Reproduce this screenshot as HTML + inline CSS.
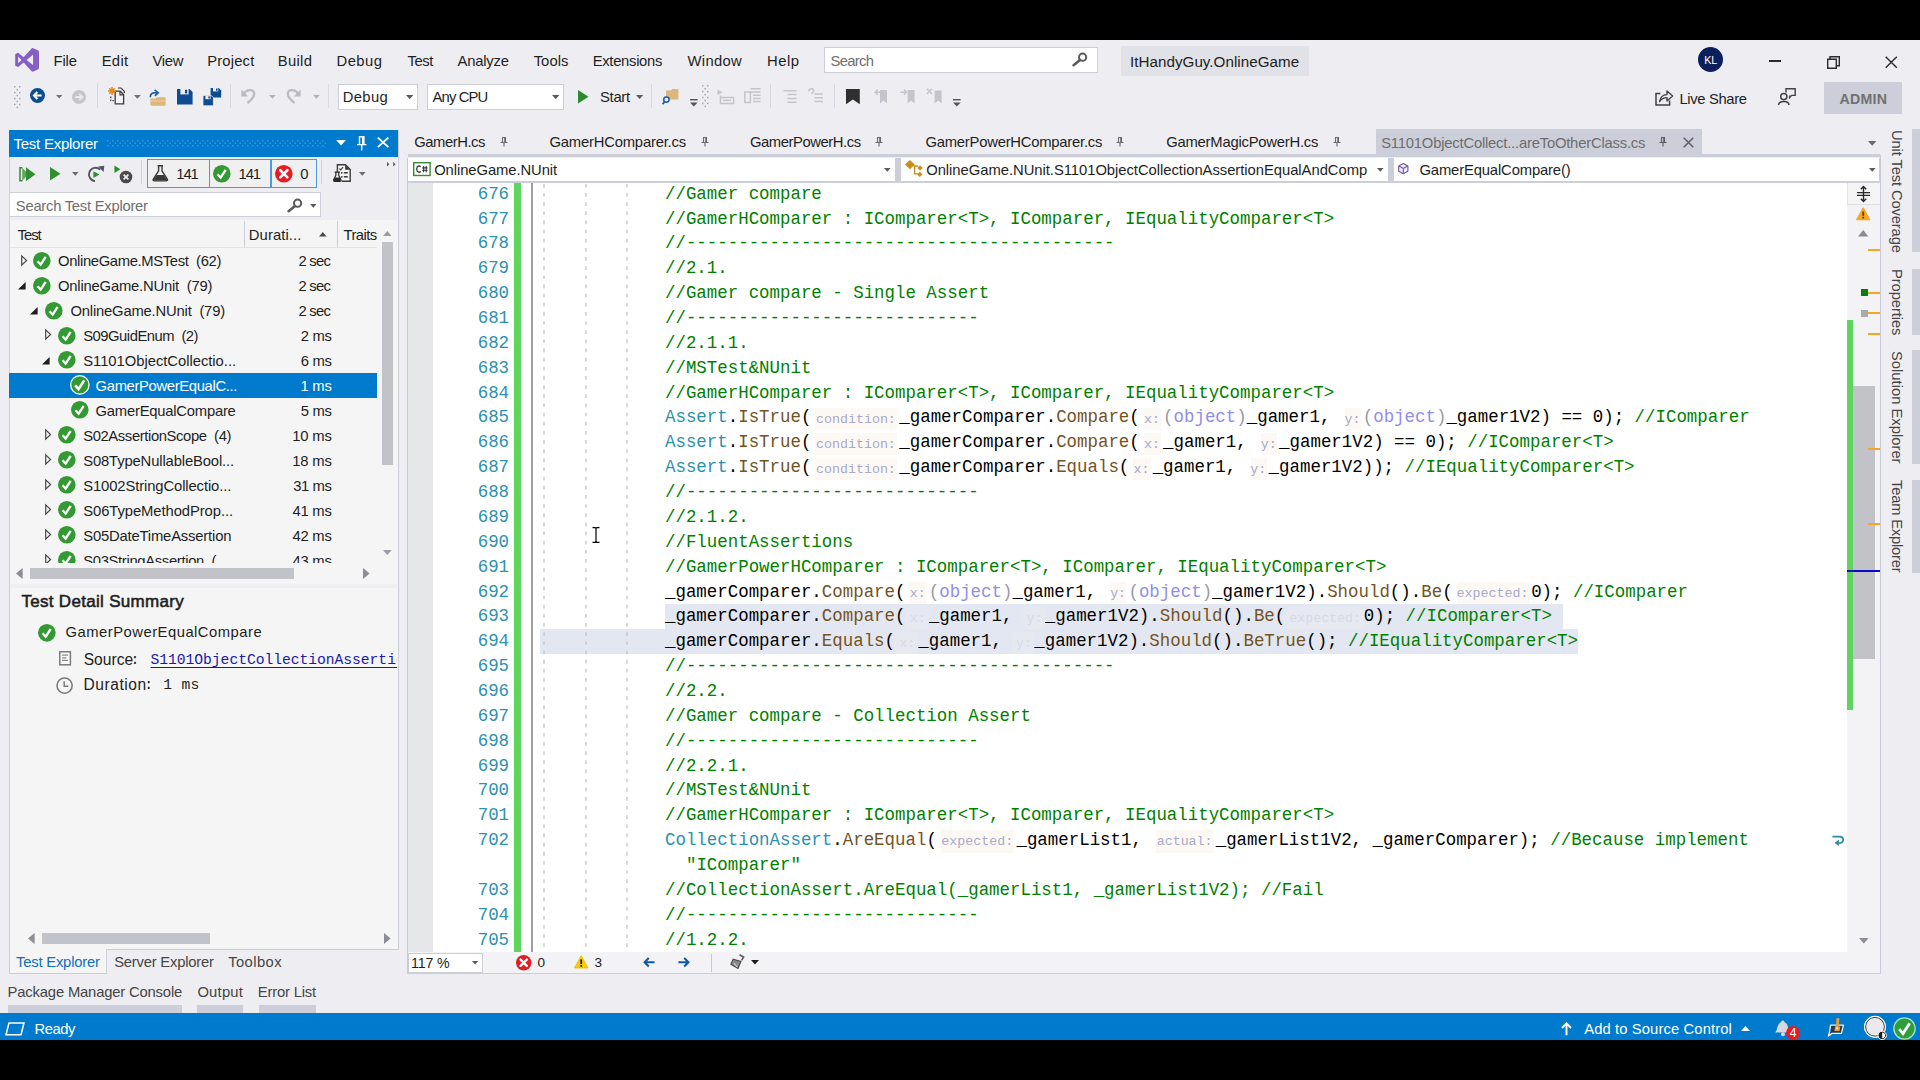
<!DOCTYPE html>
<html><head><meta charset="utf-8"><title>VS</title><style>
html,body{margin:0;padding:0;background:#000;}
body{width:1920px;height:1080px;position:relative;overflow:hidden;font-family:'Liberation Sans', sans-serif;}
#r{position:absolute;left:0;top:0;width:1920px;height:1080px;overflow:hidden;background:#000;}
#r div,#r svg{position:absolute;}
#r svg{overflow:visible;}
#r .cl,#r .ln{font-family:'Liberation Mono', monospace;font-size:17.430px;height:24.865px;line-height:24.865px;white-space:pre;color:#000;}
#r .ln{color:#2b91af;}
.c{color:#008000;} .k{color:#2b91af;} .m{color:#74531f;}
.fo{color:#9a9aa0;} .fk{color:#8f8fe6;}
.h{display:inline-block;box-sizing:border-box;height:22.5px;line-height:24px;font-size:13.3px;text-align:center;color:#a9a9cc;background:#fcf9f4;vertical-align:baseline;position:relative;top:0.3px;border-radius:2px;background-clip:content-box;padding:0 2.4px 0 3.6px;}
.hf{color:#d6dae8;background:#e7e9f1;}
</style></head><body><div id="r">
<div style="left:0px;top:40px;width:1920px;height:1000px;background:#eeeef2;"></div>
<svg style="left:15px;top:48px;" width="24.2" height="23.8" viewBox="0 0 24 24"><path fill="#865fc5" d="M17.583.063a1.5 1.5 0 00-1.032.392 1.5 1.5 0 00-.001 0A.88.88 0 0016.5.5L8.528 9.316 3.875 5.5l-.407-.35a1 1 0 00-1.024-.154.99.99 0 00-.012.005l-1.817.75a1 1 0 00-.077.036.98.98 0 00-.047.028l-.038.022a1 1 0 00-.453.838v10.65a1 1 0 00.453.838l.038.022a.98.98 0 00.047.028 1 1 0 00.077.036l1.817.75a.99.99 0 00.012.005 1 1 0 001.024-.154l.407-.35 4.653-3.816L16.5 23.5a.88.88 0 00.05.045 1.5 1.5 0 00.001 0 1.5 1.5 0 001.032.392 1.5 1.5 0 00.61-.13l5.082-2.446A1.5 1.5 0 0024 20.01V3.99a1.5 1.5 0 00-.725-1.351L18.193.193a1.5 1.5 0 00-.61-.13zM18 6.92v10.16L11.5 12zM3 8.574L6.358 12 3 15.426z"/></svg>
<div style="letter-spacing:-0.171px;left:53.60px;top:51.40px;height:20px;line-height:20px;font-size:14.8px;color:#1e1e1e;font-weight:normal;font-family:'Liberation Sans', sans-serif;white-space:pre;">File</div>
<div style="letter-spacing:0.305px;left:101.70px;top:51.40px;height:20px;line-height:20px;font-size:14.8px;color:#1e1e1e;font-weight:normal;font-family:'Liberation Sans', sans-serif;white-space:pre;">Edit</div>
<div style="letter-spacing:-0.306px;left:152.50px;top:51.40px;height:20px;line-height:20px;font-size:14.8px;color:#1e1e1e;font-weight:normal;font-family:'Liberation Sans', sans-serif;white-space:pre;">View</div>
<div style="letter-spacing:0.176px;left:207.20px;top:51.40px;height:20px;line-height:20px;font-size:14.8px;color:#1e1e1e;font-weight:normal;font-family:'Liberation Sans', sans-serif;white-space:pre;">Project</div>
<div style="letter-spacing:0.332px;left:277.70px;top:51.40px;height:20px;line-height:20px;font-size:14.8px;color:#1e1e1e;font-weight:normal;font-family:'Liberation Sans', sans-serif;white-space:pre;">Build</div>
<div style="letter-spacing:0.457px;left:336.50px;top:51.40px;height:20px;line-height:20px;font-size:14.8px;color:#1e1e1e;font-weight:normal;font-family:'Liberation Sans', sans-serif;white-space:pre;">Debug</div>
<div style="letter-spacing:-0.442px;left:407.50px;top:51.40px;height:20px;line-height:20px;font-size:14.8px;color:#1e1e1e;font-weight:normal;font-family:'Liberation Sans', sans-serif;white-space:pre;">Test</div>
<div style="letter-spacing:-0.202px;left:457.50px;top:51.40px;height:20px;line-height:20px;font-size:14.8px;color:#1e1e1e;font-weight:normal;font-family:'Liberation Sans', sans-serif;white-space:pre;">Analyze</div>
<div style="letter-spacing:0.039px;left:533.70px;top:51.40px;height:20px;line-height:20px;font-size:14.8px;color:#1e1e1e;font-weight:normal;font-family:'Liberation Sans', sans-serif;white-space:pre;">Tools</div>
<div style="letter-spacing:-0.298px;left:592.70px;top:51.40px;height:20px;line-height:20px;font-size:14.8px;color:#1e1e1e;font-weight:normal;font-family:'Liberation Sans', sans-serif;white-space:pre;">Extensions</div>
<div style="letter-spacing:0.312px;left:687.50px;top:51.40px;height:20px;line-height:20px;font-size:14.8px;color:#1e1e1e;font-weight:normal;font-family:'Liberation Sans', sans-serif;white-space:pre;">Window</div>
<div style="letter-spacing:0.499px;left:767.00px;top:51.40px;height:20px;line-height:20px;font-size:14.8px;color:#1e1e1e;font-weight:normal;font-family:'Liberation Sans', sans-serif;white-space:pre;">Help</div>
<div style="left:823.5px;top:47px;width:274.5px;height:26px;background:#ffffff;border:1px solid #ccced8;box-sizing:border-box;"></div>
<div style="letter-spacing:-0.691px;left:830.50px;top:51.40px;height:20px;line-height:20px;font-size:14.8px;color:#6e6e6e;font-weight:normal;font-family:'Liberation Sans', sans-serif;white-space:pre;">Search</div>
<svg style="left:1072px;top:52px;" width="16" height="14" viewBox="0 0 16 14"><circle cx="10.6" cy="5.2" r="3.6" fill="none" stroke="#5a5a5a" stroke-width="2"/><path d="M8.0 8.0 L1.6 13.2" stroke="#5a5a5a" stroke-width="2.6" stroke-linecap="round"/></svg>
<div style="left:1121px;top:45.5px;width:187.7px;height:30px;background:#e0e2e7;"></div>
<div style="letter-spacing:0.030px;left:1130.00px;top:52.10px;height:20px;line-height:20px;font-size:15.2px;color:#1e1e1e;font-weight:normal;font-family:'Liberation Sans', sans-serif;white-space:pre;">ItHandyGuy.OnlineGame</div>
<div style="left:1698.2px;top:47px;width:25px;height:25px;border-radius:50%;background:#0a1f5c;"></div>
<div style="letter-spacing:-0.201px;left:1704.30px;top:50.40px;height:20px;line-height:20px;font-size:10.8px;color:#fff;font-weight:normal;font-family:'Liberation Sans', sans-serif;white-space:pre;">KL</div>
<div style="left:1768.7px;top:60.3px;width:12.5px;height:1.5px;background:#2b2b2b;"></div>
<svg style="left:1827px;top:56px;" width="13" height="13" viewBox="0 0 13 13"><path d="M0.7 3.3 H9.3 V12.3 H0.7 Z" fill="none" stroke="#2b2b2b" stroke-width="1.4"/><path d="M3 3 V0.7 H12.3 V9.7 H9.6" fill="none" stroke="#2b2b2b" stroke-width="1.4"/></svg>
<svg style="left:1885px;top:56px;" width="12.5" height="12.5" viewBox="0 0 12.5 12.5"><path d="M0.7 0.7 L11.8 11.8 M11.8 0.7 L0.7 11.8" stroke="#2b2b2b" stroke-width="1.4"/></svg>
<svg style="left:13.9px;top:85.6px;" width="7" height="23" viewBox="0 0 7 23"><rect x="0" y="0.00" width="1.5" height="1.5" fill="#a3a4b0"/><rect x="5" y="0.00" width="1.5" height="1.5" fill="#a3a4b0"/><rect x="2.5" y="2.95" width="1.5" height="1.5" fill="#a3a4b0"/><rect x="0" y="5.90" width="1.5" height="1.5" fill="#a3a4b0"/><rect x="5" y="5.90" width="1.5" height="1.5" fill="#a3a4b0"/><rect x="2.5" y="8.85" width="1.5" height="1.5" fill="#a3a4b0"/><rect x="0" y="11.80" width="1.5" height="1.5" fill="#a3a4b0"/><rect x="5" y="11.80" width="1.5" height="1.5" fill="#a3a4b0"/><rect x="2.5" y="14.75" width="1.5" height="1.5" fill="#a3a4b0"/><rect x="0" y="17.70" width="1.5" height="1.5" fill="#a3a4b0"/><rect x="5" y="17.70" width="1.5" height="1.5" fill="#a3a4b0"/><rect x="2.5" y="20.65" width="1.5" height="1.5" fill="#a3a4b0"/></svg>
<svg style="left:30.4px;top:88.3px;" width="15" height="15" viewBox="0 0 15 15"><circle cx="7.5" cy="7.5" r="7.5" fill="#0e4c92"/><path d="M11.6 7.5 H4.2 M7.4 4.1 L4 7.5 L7.4 10.9" fill="none" stroke="#fff" stroke-width="2.1"/></svg>
<svg style="left:55.6px;top:95.2px;" width="6.4" height="3.6" viewBox="0 0 6.4 3.6"><path d="M0 0 H6.4 L3.2 3.6 Z" fill="#717171"/></svg>
<svg style="left:71.7px;top:89.7px;" width="14" height="14" viewBox="0 0 14 14"><circle cx="7" cy="7" r="7" fill="#c5c5cb"/><path d="M3.4 7 H10.2 M7.2 3.9 L10.4 7 L7.2 10.1" fill="none" stroke="#e9e9ee" stroke-width="2"/></svg>
<div style="left:97.2px;top:83px;width:1px;height:25px;background:#d9dae1;"></div>
<svg style="left:108px;top:87px;" width="17" height="18" viewBox="0 0 17 18"><path d="M7.2 4.2 H12.2 L15.6 7.6 V16.8 H7.2 Z" fill="#f4f4f7" stroke="#3b3b3b" stroke-width="1.3"/><path d="M12 4.4 V7.8 H15.4" fill="none" stroke="#3b3b3b" stroke-width="1.2"/><path d="M2.8 9.6 V13.6 H5.8" fill="none" stroke="#3b3b3b" stroke-width="1.2" stroke-dasharray="1.6 1.2"/><path d="M10 1.0 H13 L16.4 4.4 V6" fill="none" stroke="#3b3b3b" stroke-width="1.2"/><g stroke="#e8871a" stroke-width="1.5"><path d="M4 0 V8 M0 4 H8 M1.2 1.2 L6.8 6.8 M6.8 1.2 L1.2 6.8"/></g></svg>
<svg style="left:134.4px;top:95px;" width="6.8" height="3.8" viewBox="0 0 6.8 3.8"><path d="M0 0 H6.8 L3.4 3.8 Z" fill="#717171"/></svg>
<svg style="left:148.6px;top:89.6px;" width="18" height="16.4" viewBox="0 0 18 16.4"><path d="M1.4 8.6 H6.6 L7.8 7.2 H15.6 Q16.6 7.2 16.6 8.2 V14.6 Q16.6 15.8 15.4 15.8 H2.6 Q1.4 15.8 1.4 14.6 Z" fill="#dcb67a"/><path d="M1.4 10.4 H16.6 V11.6 H1.4 Z" fill="#f1d9ad" opacity="0.7"/><path d="M1.3 7.2 Q1.0 2.0 8.4 2.6 M5.6 -0.2 L9.2 2.7 L5.9 5.8" fill="none" stroke="#1b5fa6" stroke-width="1.7"/></svg>
<svg style="left:177.2px;top:89px;" width="15.6" height="15.6" viewBox="0 0 15.6 15.6"><path d="M0 0 H12.6 L15.6 3 V15.6 H0 Z" fill="#0e4c92"/><rect x="3.4" y="0" width="8.2" height="5.4" fill="#eeeef2"/><rect x="8" y="0.8" width="2.2" height="3.6" fill="#0e4c92"/></svg>
<svg style="left:203px;top:88px;" width="18.2" height="17.8" viewBox="0 0 18.2 17.8"><path d="M7.6 0 H15.8 L18.2 2.4 V9.6 H7.6 Z" fill="#0e4c92"/><rect x="10" y="0" width="5.2" height="3.4" fill="#eeeef2"/><rect x="13" y="0.5" width="1.5" height="2.3" fill="#0e4c92"/><path d="M0 7.4 H8.2 L10.4 9.6 V17.8 H0 Z" fill="#0e4c92" stroke="#eeeef2" stroke-width="0.8"/><rect x="2.4" y="7.8" width="5.2" height="3.4" fill="#eeeef2"/><rect x="5.4" y="8.3" width="1.5" height="2.3" fill="#0e4c92"/></svg>
<div style="left:230.3px;top:84px;width:1px;height:24px;background:#d9dae1;"></div>
<svg style="left:241px;top:88px;" width="15" height="16" viewBox="0 0 15 16"><path d="M6.4 15 C15 8.5 15 2.2 9 2.2 C6 2.2 3.6 4 2.4 7.4" fill="none" stroke="#b9bac3" stroke-width="2.3"/><path d="M0.4 1.6 V8.6 H7.2 Z" fill="#b9bac3"/></svg>
<svg style="left:268.7px;top:95px;" width="6.8" height="3.8" viewBox="0 0 6.8 3.8"><path d="M0 0 H6.8 L3.4 3.8 Z" fill="#b0b1ba"/></svg>
<svg style="left:286px;top:88px;" width="15" height="16" viewBox="0 0 15 16"><path d="M8.6 15 C0 8.5 0 2.2 6 2.2 C9 2.2 11.4 4 12.6 7.4" fill="none" stroke="#b9bac3" stroke-width="2.3"/><path d="M14.6 1.6 V8.6 H7.8 Z" fill="#b9bac3"/></svg>
<svg style="left:313px;top:95px;" width="6.8" height="3.8" viewBox="0 0 6.8 3.8"><path d="M0 0 H6.8 L3.4 3.8 Z" fill="#b0b1ba"/></svg>
<div style="left:328.2px;top:84px;width:1px;height:24px;background:#d9dae1;"></div>
<div style="left:338px;top:83.7px;width:80px;height:26px;background:#ffffff;border:1px solid #ccced8;box-sizing:border-box;"></div>
<div style="letter-spacing:0.357px;left:342.70px;top:87.20px;height:20px;line-height:20px;font-size:14.8px;color:#1e1e1e;font-weight:normal;font-family:'Liberation Sans', sans-serif;white-space:pre;">Debug</div>
<svg style="left:406.1px;top:95px;" width="7.4" height="4.2" viewBox="0 0 7.4 4.2"><path d="M0 0 H7.4 L3.7 4.2 Z" fill="#5a5a5a"/></svg>
<div style="left:427px;top:83.7px;width:137.3px;height:26px;background:#ffffff;border:1px solid #ccced8;box-sizing:border-box;"></div>
<div style="letter-spacing:-0.861px;left:432.50px;top:87.20px;height:20px;line-height:20px;font-size:14.8px;color:#1e1e1e;font-weight:normal;font-family:'Liberation Sans', sans-serif;white-space:pre;">Any CPU</div>
<svg style="left:552px;top:95px;" width="7.4" height="4.2" viewBox="0 0 7.4 4.2"><path d="M0 0 H7.4 L3.7 4.2 Z" fill="#5a5a5a"/></svg>
<svg style="left:578px;top:89.5px;" width="10.5" height="13.5" viewBox="0 0 10.5 13.5"><path d="M0 0 L10.5 6.75 L0 13.5 Z" fill="#2c8a2c"/></svg>
<div style="letter-spacing:-0.284px;left:600.00px;top:87.20px;height:20px;line-height:20px;font-size:14.8px;color:#1e1e1e;font-weight:normal;font-family:'Liberation Sans', sans-serif;white-space:pre;">Start</div>
<svg style="left:636px;top:95px;" width="7.2" height="4.1" viewBox="0 0 7.2 4.1"><path d="M0 0 H7.2 L3.6 4.1 Z" fill="#5a5a5a"/></svg>
<div style="left:651px;top:84px;width:1px;height:24px;background:#d9dae1;"></div>
<svg style="left:662px;top:88px;" width="18" height="17" viewBox="0 0 18 17"><path d="M4 2.6 H9 L10.2 1 H16.4 V11.6 H4 Z" fill="#dcb67a"/><circle cx="4.4" cy="11.6" r="2.7" fill="#eeeef2" stroke="#1b5fa6" stroke-width="1.5"/><path d="M2.6 13.6 L0.6 16.2" stroke="#1b5fa6" stroke-width="1.8"/></svg>
<svg style="left:689.5px;top:98.5px;" width="7.6" height="8" viewBox="0 0 7.6 8"><rect x="0" y="0" width="7.6" height="1.4" fill="#555"/><path d="M0 3.6 H7.6 L3.8 7.6 Z" fill="#555"/></svg>
<svg style="left:701.8px;top:85.4px;" width="7" height="23" viewBox="0 0 7 23"><rect x="0" y="0.00" width="1.5" height="1.5" fill="#a3a4b0"/><rect x="5" y="0.00" width="1.5" height="1.5" fill="#a3a4b0"/><rect x="2.5" y="2.95" width="1.5" height="1.5" fill="#a3a4b0"/><rect x="0" y="5.90" width="1.5" height="1.5" fill="#a3a4b0"/><rect x="5" y="5.90" width="1.5" height="1.5" fill="#a3a4b0"/><rect x="2.5" y="8.85" width="1.5" height="1.5" fill="#a3a4b0"/><rect x="0" y="11.80" width="1.5" height="1.5" fill="#a3a4b0"/><rect x="5" y="11.80" width="1.5" height="1.5" fill="#a3a4b0"/><rect x="2.5" y="14.75" width="1.5" height="1.5" fill="#a3a4b0"/><rect x="0" y="17.70" width="1.5" height="1.5" fill="#a3a4b0"/><rect x="5" y="17.70" width="1.5" height="1.5" fill="#a3a4b0"/><rect x="2.5" y="20.65" width="1.5" height="1.5" fill="#a3a4b0"/></svg>
<svg style="left:717px;top:89px;" width="18" height="16" viewBox="0 0 18 16"><path d="M0.5 0.5 L5.5 3.2 L0.5 6 Z" fill="#c3c4cc"/><path d="M3.4 6.5 V14.4 H16.6 V8.4 H3.4" fill="none" stroke="#c3c4cc" stroke-width="1.5"/><path d="M6 11.4 H14" stroke="#c3c4cc" stroke-width="1.4"/></svg>
<svg style="left:744px;top:88px;" width="17.5" height="17" viewBox="0 0 17.5 17"><path d="M6.4 0.8 H16.6 M6.4 4 H16.6 M9 7.2 H16.6 M9 10.4 H16.6 M9 13.6 H16.6" stroke="#c3c4cc" stroke-width="1.5"/><path d="M0.8 4 H6.4 V14.6 H0.8 Z" fill="none" stroke="#c3c4cc" stroke-width="1.5"/></svg>
<div style="left:770.2px;top:84px;width:1px;height:24px;background:#d9dae1;"></div>
<svg style="left:782.5px;top:89.5px;" width="14" height="14" viewBox="0 0 14 14"><path d="M0.5 0.8 H13.5 M4.5 4.6 H13.5 M4.5 8.4 H13.5 M4.5 12.2 H13.5" stroke="#c3c4cc" stroke-width="1.5"/></svg>
<svg style="left:807.5px;top:88px;" width="15.5" height="16" viewBox="0 0 15.5 16"><path d="M0.5 3.2 C1.5 -0.4 6.4 0.2 5.6 3.4 L3.2 6" fill="none" stroke="#c3c4cc" stroke-width="1.5"/><path d="M6.5 6 H15 M6.5 9.8 H15 M6.5 13.6 H15" stroke="#c3c4cc" stroke-width="1.5"/></svg>
<div style="left:834.2px;top:84px;width:1px;height:24px;background:#d9dae1;"></div>
<svg style="left:845.5px;top:88.7px;" width="13.8" height="15.2" viewBox="0 0 13.8 15.2"><path d="M0 0 H13.8 V15.2 L6.9 10.6 L0 15.2 Z" fill="#2f2f2f"/></svg>
<svg style="left:874px;top:88px;" width="14" height="16" viewBox="0 0 14 16"><path d="M6 2 H13 V15.6 L9.5 12.6 L6 15.6 Z" fill="#c3c4cc"/><path d="M7 4.2 H1.4 M3.8 1.6 L1.2 4.2 L3.8 6.8" fill="none" stroke="#c3c4cc" stroke-width="1.5"/></svg>
<svg style="left:900px;top:88px;" width="15" height="16" viewBox="0 0 15 16"><path d="M7.6 2 H14.6 V15.6 L11.1 12.6 L7.6 15.6 Z" fill="#c3c4cc"/><path d="M0.4 4.2 H6.4 M4 1.6 L6.6 4.2 L4 6.8" fill="none" stroke="#c3c4cc" stroke-width="1.5"/></svg>
<svg style="left:926px;top:88px;" width="16" height="16" viewBox="0 0 16 16"><path d="M8.6 2.6 H15.6 V15.6 L12.1 12.6 L8.6 15.6 Z" fill="#c3c4cc"/><path d="M0.8 0.8 L6 6 M6 0.8 L0.8 6" stroke="#c3c4cc" stroke-width="1.4"/></svg>
<svg style="left:953px;top:98.5px;" width="7.6" height="8" viewBox="0 0 7.6 8"><rect x="0" y="0" width="7.6" height="1.4" fill="#555"/><path d="M0 3.6 H7.6 L3.8 7.6 Z" fill="#555"/></svg>
<svg style="left:1654.5px;top:89.4px;" width="18.5" height="17" viewBox="0 0 18.5 17"><path d="M5.4 4.4 H1 V16 H14.6 V11.6" fill="none" stroke="#424242" stroke-width="1.5"/><path d="M4.6 12.6 C5.4 7.6 8.6 5.6 12 5.6 V2 L17.6 7 L12 12 V8.6 C9 8.6 6.6 9.6 4.6 12.6 Z" fill="none" stroke="#424242" stroke-width="1.4" stroke-linejoin="round"/></svg>
<div style="letter-spacing:-0.368px;left:1679.50px;top:89.00px;height:20px;line-height:20px;font-size:14.8px;color:#1e1e1e;font-weight:normal;font-family:'Liberation Sans', sans-serif;white-space:pre;">Live Share</div>
<svg style="left:1777.5px;top:88.0px;" width="18" height="17.5" viewBox="0 0 18 17.5"><circle cx="5.8" cy="8.6" r="3.1" fill="none" stroke="#424242" stroke-width="1.5"/><path d="M0.6 17 C0.8 12.4 10.8 12.4 11 17" fill="none" stroke="#424242" stroke-width="1.5"/><path d="M8 4.6 V0.8 H17.2 V7.4 H13.6 L11.6 9.6 V7.4" fill="none" stroke="#424242" stroke-width="1.4"/></svg>
<div style="left:1824px;top:82px;width:77.7px;height:31.7px;background:#ccced9;"></div>
<div style="letter-spacing:0.237px;left:1839.50px;top:88.50px;height:20px;line-height:20px;font-size:14.2px;color:#717171;font-weight:bold;font-family:'Liberation Sans', sans-serif;white-space:pre;">ADMIN</div>
<div style="left:8.7px;top:130px;width:390px;height:819.5px;background:#f5f5f5;border:1px solid #ccced8;box-sizing:border-box;"></div>
<div style="left:8.7px;top:130px;width:389.5px;height:26.8px;background:#007acc;"></div>
<div style="letter-spacing:-0.253px;left:13.50px;top:134.00px;height:20px;line-height:20px;font-size:15px;color:#ffffff;font-weight:normal;font-family:'Liberation Sans', sans-serif;white-space:pre;">Test Explorer</div>
<svg style="left:107px;top:139.8px" width="219" height="7.6"><defs><pattern id="hd" width="5" height="5" patternUnits="userSpaceOnUse"><rect x="0" y="0" width="1.5" height="1.5" fill="#ffffff" fill-opacity="0.2"/><rect x="2.5" y="2.5" width="1.5" height="1.5" fill="#ffffff" fill-opacity="0.2"/></pattern></defs><rect width="219" height="7.6" fill="url(#hd)"/></svg>
<svg style="left:336px;top:139.7px;" width="10" height="5.4" viewBox="0 0 10 5.4"><path d="M0 0 H10 L5.0 5.4 Z" fill="#ffffff"/></svg>
<svg style="left:356.9px;top:135.7px;" width="9.4" height="14.4" viewBox="0 0 9.4 14.4"><path d="M1.8 0.7 H7.6 M2.5 0.7 V8.2 M6.9 0.7 V8.2 M0 8.6 H9.4 M4.7 8.6 V14.4" stroke="#fff" stroke-width="1.4" fill="none"/><rect x="5" y="0.7" width="1.9" height="7.4" fill="#fff"/></svg>
<svg style="left:376.8px;top:137.4px;" width="12.2" height="10.8" viewBox="0 0 12.2 10.8"><path d="M0.8 0.6 L11.4 10.2 M11.4 0.6 L0.8 10.2" stroke="#fff" stroke-width="1.8"/></svg>
<div style="left:9.7px;top:156.8px;width:387.5px;height:62.8px;background:#eeeef2;"></div>
<svg style="left:18.6px;top:165.5px;" width="16.5" height="16.5" viewBox="0 0 16.5 16.5"><path d="M3.4 1.8 H1 V14.7 H3.4" fill="none" stroke="#2f8f2f" stroke-width="1.5"/><path d="M3.2 1.8 L9.4 8.25 L3.2 14.7 Z" fill="#2f8f2f" opacity="0.75"/><path d="M7 1.2 L16.4 8.25 L7 15.3 Z" fill="#2f8f2f"/></svg>
<svg style="left:50px;top:166.8px;" width="10.6" height="13.4" viewBox="0 0 10.6 13.4"><path d="M0 0 L10.6 6.7 L0 13.4 Z" fill="#2f8f2f"/></svg>
<svg style="left:72.4px;top:171.7px;" width="6.6" height="3.7" viewBox="0 0 6.6 3.7"><path d="M0 0 H6.6 L3.3 3.7 Z" fill="#6a6a6a"/></svg>
<svg style="left:87px;top:165px;" width="17.5" height="17.5" viewBox="0 0 17.5 17.5"><path d="M13.3 4.6 A6.7 6.7 0 1 0 8.0 16.1" fill="none" stroke="#55555f" stroke-width="1.9"/><path d="M11.2 1.6 L17.3 0.8 L16.6 7 Z" fill="#55555f"/><path d="M6.4 6.2 L12.4 9.6 L6.4 13 Z" fill="#2f8f2f"/></svg>
<svg style="left:113.7px;top:164.5px;" width="18.5" height="18.5" viewBox="0 0 18.5 18.5"><path d="M0.4 0.4 L6.4 4.2 L0.4 8 Z" fill="#2f8f2f"/><circle cx="12" cy="12" r="6.3" fill="#4a4a4a"/><path d="M9.6 9.6 L14.4 14.4 M14.4 9.6 L9.6 14.4" stroke="#eeeef2" stroke-width="1.7"/></svg>
<div style="left:141.3px;top:160px;width:1px;height:24px;background:#d2d3da;"></div>
<div style="left:147px;top:159.3px;width:62.6px;height:28.6px;background:#f0f0f1;border:1.2px solid #4a98e8;box-sizing:border-box;"></div>
<div style="left:209px;top:159.3px;width:62.2px;height:28.6px;background:#f0f0f1;border:1.2px solid #4a98e8;box-sizing:border-box;"></div>
<div style="left:270.6px;top:159.3px;width:46.800000000000004px;height:28.6px;background:#f0f0f1;border:1.2px solid #4a98e8;box-sizing:border-box;"></div>
<svg style="left:152px;top:165.2px;" width="16.6" height="16.6" viewBox="0 0 16.6 16.6"><path d="M5.6 0.7 H11 M6.6 0.7 V6 L1.2 14.2 Q0.6 15.9 2.4 15.9 H14.2 Q16 15.9 15.4 14.2 L10 6 V0.7" fill="none" stroke="#3a3a3a" stroke-width="1.4"/><path d="M4.6 10 H12 L15 14.4 Q15.4 15.6 14 15.6 H2.6 Q1.2 15.6 1.6 14.4 Z" fill="#3a3a3a"/></svg>
<div style="letter-spacing:-1.029px;left:176.20px;top:164.10px;height:20px;line-height:20px;font-size:14.8px;color:#1e1e1e;font-weight:normal;font-family:'Liberation Sans', sans-serif;white-space:pre;">141</div>
<svg style="left:213.4px;top:165px;" width="17.6" height="17.6" viewBox="0 0 17.6 17.6"><circle cx="8.8" cy="8.8" r="8.8" fill="#339933"/><path d="M4.626285714285714 9.252571428571429 L7.643428571428571 12.672 L12.672 4.827428571428571" fill="none" stroke="#fff" stroke-width="2.313142857142857" stroke-linecap="butt" stroke-linejoin="miter"/></svg>
<div style="letter-spacing:-1.079px;left:238.50px;top:164.10px;height:20px;line-height:20px;font-size:14.8px;color:#1e1e1e;font-weight:normal;font-family:'Liberation Sans', sans-serif;white-space:pre;">141</div>
<svg style="left:275.2px;top:165px;" width="17.6" height="17.6" viewBox="0 0 17.6 17.6"><circle cx="8.8" cy="8.8" r="8.8" fill="#e51c23"/><path d="M5.229714285714286 5.229714285714286 L12.370285714285716 12.370285714285716 M12.370285714285716 5.229714285714286 L5.229714285714286 12.370285714285716" stroke="#fff" stroke-width="2.614857142857143" stroke-linecap="round"/></svg>
<div style="letter-spacing:0.000px;left:300.20px;top:164.10px;height:20px;line-height:20px;font-size:14.8px;color:#1e1e1e;font-weight:normal;font-family:'Liberation Sans', sans-serif;white-space:pre;">0</div>
<div style="left:321.3px;top:160px;width:1px;height:24px;background:#d2d3da;"></div>
<svg style="left:332.5px;top:164px;" width="18" height="18" viewBox="0 0 18 18"><path d="M4.4 8 V0.7 H12.4 L17.2 5.5 V17.3 H8.6" fill="#f4f4f6" stroke="#3a3a3a" stroke-width="1.4"/><path d="M12.2 0.9 V5.7 H17 Z" fill="#3a3a3a"/><path d="M6.4 4.6 L7.7 5.9 L10 3.2" fill="none" stroke="#3a3a3a" stroke-width="1.1"/><circle cx="8.8" cy="8.8" r="0.85" fill="#2a2a2a"/><path d="M10.8 8.8 H14.8" stroke="#2a2a2a" stroke-width="1.4"/><circle cx="8.8" cy="12.8" r="0.85" fill="#2a2a2a"/><path d="M10.8 12.8 H14.8" stroke="#2a2a2a" stroke-width="1.4"/><path d="M1.6 8.1 H7 M2.9 8.1 V11.2 L0.7 15.8 Q0.3 17.4 1.7 17.4 H6.9 Q8.3 17.4 7.9 15.8 L5.7 11.2 V8.1" fill="#eeeef2" stroke="#2a2a2a" stroke-width="1.2"/><path d="M1.7 13.4 H6.9 L7.8 15.8 Q8 17.2 6.8 17.2 H1.8 Q0.6 17.2 0.8 15.8 Z" fill="#2a2a2a"/></svg>
<svg style="left:359px;top:171.7px;" width="6.6" height="3.7" viewBox="0 0 6.6 3.7"><path d="M0 0 H6.6 L3.3 3.7 Z" fill="#6a6a6a"/></svg>
<svg style="left:386.8px;top:162.4px;" width="9" height="4.6" viewBox="0 0 9 4.6"><path d="M0 0 L2.3 2.3 L0 4.6 Z M6.2 0 L8.5 2.3 L6.2 4.6 Z" fill="#5a5a5a"/></svg>
<div style="left:9.4px;top:191.7px;width:311.2px;height:25.4px;background:#ffffff;border:1px solid #ccced8;box-sizing:border-box;"></div>
<div style="letter-spacing:-0.259px;left:15.80px;top:195.90px;height:20px;line-height:20px;font-size:14.8px;color:#6e6e6e;font-weight:normal;font-family:'Liberation Sans', sans-serif;white-space:pre;">Search Test Explorer</div>
<svg style="left:286.6px;top:198px;" width="16" height="14" viewBox="0 0 16 14"><circle cx="10.6" cy="5.2" r="3.6" fill="none" stroke="#5a5a5a" stroke-width="2"/><path d="M8.0 8.0 L1.6 13.2" stroke="#5a5a5a" stroke-width="2.6" stroke-linecap="round"/></svg>
<svg style="left:309.6px;top:203.8px;" width="6.6" height="3.7" viewBox="0 0 6.6 3.7"><path d="M0 0 H6.6 L3.3 3.7 Z" fill="#5a5a5a"/></svg>
<div style="letter-spacing:-0.975px;left:17.50px;top:225.20px;height:20px;line-height:20px;font-size:14.8px;color:#1e1e1e;font-weight:normal;font-family:'Liberation Sans', sans-serif;white-space:pre;">Test</div>
<div style="left:243.6px;top:221px;width:1.2px;height:26px;background:#ccced8;"></div>
<div style="letter-spacing:0.088px;left:248.80px;top:225.20px;height:20px;line-height:20px;font-size:14.8px;color:#1e1e1e;font-weight:normal;font-family:'Liberation Sans', sans-serif;white-space:pre;">Durati...</div>
<svg style="left:318.8px;top:232px;" width="7.6" height="4.4" viewBox="0 0 7.6 4.4"><path d="M0 4.4 H7.6 L3.8 0 Z" fill="#4a4a4a"/></svg>
<div style="left:337px;top:221px;width:1.2px;height:26px;background:#ccced8;"></div>
<div style="letter-spacing:-0.549px;left:343.50px;top:225.20px;height:20px;line-height:20px;font-size:14.8px;color:#1e1e1e;font-weight:normal;font-family:'Liberation Sans', sans-serif;white-space:pre;">Traits</div>
<div style="left:9.7px;top:246.6px;width:367px;height:1px;background:#e3e4ea;"></div>
<div style="left:378px;top:221px;width:19px;height:340px;background:#f5f5f5;"></div>
<svg style="left:383px;top:231.4px;" width="8.6" height="5" viewBox="0 0 8.6 5"><path d="M0 5 H8.6 L4.3 0 Z" fill="#9a9ba4"/></svg>
<div style="left:382px;top:242px;width:10.8px;height:223px;background:#c2c3c9;"></div>
<svg style="left:383px;top:549.5px;" width="8.6" height="5" viewBox="0 0 8.6 5"><path d="M0 0 H8.6 L4.3 5 Z" fill="#9a9ba4"/></svg>
<div style="left:0;top:247.6px;width:378px;height:315.8px;overflow:hidden;">
<svg style="left:20.8px;top:7.000000000000028px;" width="6.6" height="11" viewBox="0 0 6.6 11"><path d="M0.7 0.9 L5.6 5.5 L0.7 10.1 Z" fill="none" stroke="#4a4a4a" stroke-width="1.2"/></svg>
<svg style="left:32.8px;top:4.200000000000028px;" width="17.6" height="17.6" viewBox="0 0 17.6 17.6"><circle cx="8.8" cy="8.8" r="8.8" fill="#339933"/><path d="M4.626285714285714 9.252571428571429 L7.643428571428571 12.672 L12.672 4.827428571428571" fill="none" stroke="#fff" stroke-width="2.313142857142857" stroke-linecap="butt" stroke-linejoin="miter"/></svg>
<div style="letter-spacing:-0.351px;left:58.00px;top:3.60px;height:20px;line-height:20px;font-size:14.8px;color:#1e1e1e;font-weight:normal;font-family:'Liberation Sans', sans-serif;white-space:pre;">OnlineGame.MSTest  (62)</div>
<div style="letter-spacing:-0.792px;left:298.60px;top:3.60px;height:20px;line-height:20px;font-size:14.8px;color:#1e1e1e;font-weight:normal;font-family:'Liberation Sans', sans-serif;white-space:pre;">2 sec</div>
<svg style="left:17.5px;top:34.60000000000003px;" width="8" height="8" viewBox="0 0 8 8"><path d="M7.6 0 V7.6 H0 Z" fill="#1e1e1e"/></svg>
<svg style="left:32.8px;top:29.200000000000028px;" width="17.6" height="17.6" viewBox="0 0 17.6 17.6"><circle cx="8.8" cy="8.8" r="8.8" fill="#339933"/><path d="M4.626285714285714 9.252571428571429 L7.643428571428571 12.672 L12.672 4.827428571428571" fill="none" stroke="#fff" stroke-width="2.313142857142857" stroke-linecap="butt" stroke-linejoin="miter"/></svg>
<div style="letter-spacing:-0.199px;left:58.00px;top:28.60px;height:20px;line-height:20px;font-size:14.8px;color:#1e1e1e;font-weight:normal;font-family:'Liberation Sans', sans-serif;white-space:pre;">OnlineGame.NUnit  (79)</div>
<div style="letter-spacing:-0.792px;left:298.60px;top:28.60px;height:20px;line-height:20px;font-size:14.8px;color:#1e1e1e;font-weight:normal;font-family:'Liberation Sans', sans-serif;white-space:pre;">2 sec</div>
<svg style="left:30.4px;top:59.50000000000001px;" width="8" height="8" viewBox="0 0 8 8"><path d="M7.6 0 V7.6 H0 Z" fill="#1e1e1e"/></svg>
<svg style="left:45.4px;top:54.10000000000001px;" width="17.6" height="17.6" viewBox="0 0 17.6 17.6"><circle cx="8.8" cy="8.8" r="8.8" fill="#339933"/><path d="M4.626285714285714 9.252571428571429 L7.643428571428571 12.672 L12.672 4.827428571428571" fill="none" stroke="#fff" stroke-width="2.313142857142857" stroke-linecap="butt" stroke-linejoin="miter"/></svg>
<div style="letter-spacing:-0.195px;left:70.50px;top:53.50px;height:20px;line-height:20px;font-size:14.8px;color:#1e1e1e;font-weight:normal;font-family:'Liberation Sans', sans-serif;white-space:pre;">OnlineGame.NUnit  (79)</div>
<div style="letter-spacing:-0.792px;left:298.60px;top:53.50px;height:20px;line-height:20px;font-size:14.8px;color:#1e1e1e;font-weight:normal;font-family:'Liberation Sans', sans-serif;white-space:pre;">2 sec</div>
<svg style="left:45.2px;top:81.79999999999998px;" width="6.6" height="11" viewBox="0 0 6.6 11"><path d="M0.7 0.9 L5.6 5.5 L0.7 10.1 Z" fill="none" stroke="#4a4a4a" stroke-width="1.2"/></svg>
<svg style="left:58px;top:78.99999999999999px;" width="17.6" height="17.6" viewBox="0 0 17.6 17.6"><circle cx="8.8" cy="8.8" r="8.8" fill="#339933"/><path d="M4.626285714285714 9.252571428571429 L7.643428571428571 12.672 L12.672 4.827428571428571" fill="none" stroke="#fff" stroke-width="2.313142857142857" stroke-linecap="butt" stroke-linejoin="miter"/></svg>
<div style="letter-spacing:-0.481px;left:83.20px;top:78.40px;height:20px;line-height:20px;font-size:14.8px;color:#1e1e1e;font-weight:normal;font-family:'Liberation Sans', sans-serif;white-space:pre;">S09GuidEnum  (2)</div>
<div style="letter-spacing:-0.355px;left:300.80px;top:78.40px;height:20px;line-height:20px;font-size:14.8px;color:#1e1e1e;font-weight:normal;font-family:'Liberation Sans', sans-serif;white-space:pre;">2 ms</div>
<svg style="left:42.4px;top:109.30000000000001px;" width="8" height="8" viewBox="0 0 8 8"><path d="M7.6 0 V7.6 H0 Z" fill="#1e1e1e"/></svg>
<svg style="left:58px;top:103.90000000000002px;" width="17.6" height="17.6" viewBox="0 0 17.6 17.6"><circle cx="8.8" cy="8.8" r="8.8" fill="#339933"/><path d="M4.626285714285714 9.252571428571429 L7.643428571428571 12.672 L12.672 4.827428571428571" fill="none" stroke="#fff" stroke-width="2.313142857142857" stroke-linecap="butt" stroke-linejoin="miter"/></svg>
<div style="letter-spacing:-0.028px;left:83.20px;top:103.30px;height:20px;line-height:20px;font-size:14.8px;color:#1e1e1e;font-weight:normal;font-family:'Liberation Sans', sans-serif;white-space:pre;">S1101ObjectCollectio...</div>
<div style="letter-spacing:-0.355px;left:300.80px;top:103.30px;height:20px;line-height:20px;font-size:14.8px;color:#1e1e1e;font-weight:normal;font-family:'Liberation Sans', sans-serif;white-space:pre;">6 ms</div>
<div style="left:8.7px;top:125.40000000000002px;width:368px;height:24.6px;background:#007acc;"></div>
<svg style="left:69.5px;top:127.80000000000001px;" width="19.7" height="19.7" viewBox="0 0 19.7 19.7"><circle cx="9.85" cy="9.85" r="9.85" fill="#fff"/><circle cx="9.85" cy="9.85" r="8.549999999999999" fill="#339933"/><path d="M5.178285714285714 10.356571428571428 L8.555428571428571 14.184 L14.184 5.403428571428571" fill="none" stroke="#fff" stroke-width="2.589142857142857" stroke-linecap="butt" stroke-linejoin="miter"/></svg>
<div style="letter-spacing:-0.345px;left:95.60px;top:128.30px;height:20px;line-height:20px;font-size:14.8px;color:#ffffff;font-weight:normal;font-family:'Liberation Sans', sans-serif;white-space:pre;">GamerPowerEqualC...</div>
<div style="letter-spacing:-0.289px;left:300.60px;top:128.30px;height:20px;line-height:20px;font-size:14.8px;color:#ffffff;font-weight:normal;font-family:'Liberation Sans', sans-serif;white-space:pre;">1 ms</div>
<svg style="left:70.6px;top:153.9px;" width="17.6" height="17.6" viewBox="0 0 17.6 17.6"><circle cx="8.8" cy="8.8" r="8.8" fill="#339933"/><path d="M4.626285714285714 9.252571428571429 L7.643428571428571 12.672 L12.672 4.827428571428571" fill="none" stroke="#fff" stroke-width="2.313142857142857" stroke-linecap="butt" stroke-linejoin="miter"/></svg>
<div style="letter-spacing:-0.231px;left:95.60px;top:153.30px;height:20px;line-height:20px;font-size:14.8px;color:#1e1e1e;font-weight:normal;font-family:'Liberation Sans', sans-serif;white-space:pre;">GamerEqualCompare</div>
<div style="letter-spacing:-0.355px;left:300.80px;top:153.30px;height:20px;line-height:20px;font-size:14.8px;color:#1e1e1e;font-weight:normal;font-family:'Liberation Sans', sans-serif;white-space:pre;">5 ms</div>
<svg style="left:45.2px;top:181.70000000000002px;" width="6.6" height="11" viewBox="0 0 6.6 11"><path d="M0.7 0.9 L5.6 5.5 L0.7 10.1 Z" fill="none" stroke="#4a4a4a" stroke-width="1.2"/></svg>
<svg style="left:58px;top:178.9px;" width="17.6" height="17.6" viewBox="0 0 17.6 17.6"><circle cx="8.8" cy="8.8" r="8.8" fill="#339933"/><path d="M4.626285714285714 9.252571428571429 L7.643428571428571 12.672 L12.672 4.827428571428571" fill="none" stroke="#fff" stroke-width="2.313142857142857" stroke-linecap="butt" stroke-linejoin="miter"/></svg>
<div style="letter-spacing:-0.383px;left:83.20px;top:178.30px;height:20px;line-height:20px;font-size:14.8px;color:#1e1e1e;font-weight:normal;font-family:'Liberation Sans', sans-serif;white-space:pre;">S02AssertionScope  (4)</div>
<div style="letter-spacing:-0.174px;left:292.20px;top:178.30px;height:20px;line-height:20px;font-size:14.8px;color:#1e1e1e;font-weight:normal;font-family:'Liberation Sans', sans-serif;white-space:pre;">10 ms</div>
<svg style="left:45.2px;top:206.70000000000002px;" width="6.6" height="11" viewBox="0 0 6.6 11"><path d="M0.7 0.9 L5.6 5.5 L0.7 10.1 Z" fill="none" stroke="#4a4a4a" stroke-width="1.2"/></svg>
<svg style="left:58px;top:203.9px;" width="17.6" height="17.6" viewBox="0 0 17.6 17.6"><circle cx="8.8" cy="8.8" r="8.8" fill="#339933"/><path d="M4.626285714285714 9.252571428571429 L7.643428571428571 12.672 L12.672 4.827428571428571" fill="none" stroke="#fff" stroke-width="2.313142857142857" stroke-linecap="butt" stroke-linejoin="miter"/></svg>
<div style="letter-spacing:-0.139px;left:83.20px;top:203.30px;height:20px;line-height:20px;font-size:14.8px;color:#1e1e1e;font-weight:normal;font-family:'Liberation Sans', sans-serif;white-space:pre;">S08TypeNullableBool...</div>
<div style="letter-spacing:-0.174px;left:292.20px;top:203.30px;height:20px;line-height:20px;font-size:14.8px;color:#1e1e1e;font-weight:normal;font-family:'Liberation Sans', sans-serif;white-space:pre;">18 ms</div>
<svg style="left:45.2px;top:231.70000000000002px;" width="6.6" height="11" viewBox="0 0 6.6 11"><path d="M0.7 0.9 L5.6 5.5 L0.7 10.1 Z" fill="none" stroke="#4a4a4a" stroke-width="1.2"/></svg>
<svg style="left:58px;top:228.9px;" width="17.6" height="17.6" viewBox="0 0 17.6 17.6"><circle cx="8.8" cy="8.8" r="8.8" fill="#339933"/><path d="M4.626285714285714 9.252571428571429 L7.643428571428571 12.672 L12.672 4.827428571428571" fill="none" stroke="#fff" stroke-width="2.313142857142857" stroke-linecap="butt" stroke-linejoin="miter"/></svg>
<div style="letter-spacing:-0.109px;left:83.20px;top:228.30px;height:20px;line-height:20px;font-size:14.8px;color:#1e1e1e;font-weight:normal;font-family:'Liberation Sans', sans-serif;white-space:pre;">S1002StringCollectio...</div>
<div style="letter-spacing:-0.424px;left:293.20px;top:228.30px;height:20px;line-height:20px;font-size:14.8px;color:#1e1e1e;font-weight:normal;font-family:'Liberation Sans', sans-serif;white-space:pre;">31 ms</div>
<svg style="left:45.2px;top:256.70000000000005px;" width="6.6" height="11" viewBox="0 0 6.6 11"><path d="M0.7 0.9 L5.6 5.5 L0.7 10.1 Z" fill="none" stroke="#4a4a4a" stroke-width="1.2"/></svg>
<svg style="left:58px;top:253.90000000000003px;" width="17.6" height="17.6" viewBox="0 0 17.6 17.6"><circle cx="8.8" cy="8.8" r="8.8" fill="#339933"/><path d="M4.626285714285714 9.252571428571429 L7.643428571428571 12.672 L12.672 4.827428571428571" fill="none" stroke="#fff" stroke-width="2.313142857142857" stroke-linecap="butt" stroke-linejoin="miter"/></svg>
<div style="letter-spacing:-0.076px;left:83.20px;top:253.30px;height:20px;line-height:20px;font-size:14.8px;color:#1e1e1e;font-weight:normal;font-family:'Liberation Sans', sans-serif;white-space:pre;">S06TypeMethodProp...</div>
<div style="letter-spacing:-0.274px;left:292.60px;top:253.30px;height:20px;line-height:20px;font-size:14.8px;color:#1e1e1e;font-weight:normal;font-family:'Liberation Sans', sans-serif;white-space:pre;">41 ms</div>
<svg style="left:45.2px;top:281.69999999999993px;" width="6.6" height="11" viewBox="0 0 6.6 11"><path d="M0.7 0.9 L5.6 5.5 L0.7 10.1 Z" fill="none" stroke="#4a4a4a" stroke-width="1.2"/></svg>
<svg style="left:58px;top:278.8999999999999px;" width="17.6" height="17.6" viewBox="0 0 17.6 17.6"><circle cx="8.8" cy="8.8" r="8.8" fill="#339933"/><path d="M4.626285714285714 9.252571428571429 L7.643428571428571 12.672 L12.672 4.827428571428571" fill="none" stroke="#fff" stroke-width="2.313142857142857" stroke-linecap="butt" stroke-linejoin="miter"/></svg>
<div style="letter-spacing:-0.177px;left:83.20px;top:278.30px;height:20px;line-height:20px;font-size:14.8px;color:#1e1e1e;font-weight:normal;font-family:'Liberation Sans', sans-serif;white-space:pre;">S05DateTimeAssertion</div>
<div style="letter-spacing:-0.274px;left:292.60px;top:278.30px;height:20px;line-height:20px;font-size:14.8px;color:#1e1e1e;font-weight:normal;font-family:'Liberation Sans', sans-serif;white-space:pre;">42 ms</div>
<svg style="left:45.2px;top:306.69999999999993px;" width="6.6" height="11" viewBox="0 0 6.6 11"><path d="M0.7 0.9 L5.6 5.5 L0.7 10.1 Z" fill="none" stroke="#4a4a4a" stroke-width="1.2"/></svg>
<svg style="left:58px;top:303.8999999999999px;" width="17.6" height="17.6" viewBox="0 0 17.6 17.6"><circle cx="8.8" cy="8.8" r="8.8" fill="#339933"/><path d="M4.626285714285714 9.252571428571429 L7.643428571428571 12.672 L12.672 4.827428571428571" fill="none" stroke="#fff" stroke-width="2.313142857142857" stroke-linecap="butt" stroke-linejoin="miter"/></svg>
<div style="letter-spacing:-0.329px;left:83.20px;top:303.30px;height:20px;line-height:20px;font-size:14.8px;color:#1e1e1e;font-weight:normal;font-family:'Liberation Sans', sans-serif;white-space:pre;">S03StringAssertion  (</div>
<div style="letter-spacing:-0.274px;left:292.60px;top:303.30px;height:20px;line-height:20px;font-size:14.8px;color:#1e1e1e;font-weight:normal;font-family:'Liberation Sans', sans-serif;white-space:pre;">43 ms</div>
</div>
<svg style="left:16.4px;top:568px;" width="6.6" height="11" viewBox="0 0 6.6 11"><path d="M6.6 0 V11 L0 5.5 Z" fill="#8c8d96"/></svg>
<div style="left:30px;top:568.3px;width:263.8px;height:10.7px;background:#c2c3c9;"></div>
<svg style="left:363px;top:568px;" width="6.6" height="11" viewBox="0 0 6.6 11"><path d="M0 0 V11 L6.6 5.5 Z" fill="#8c8d96"/></svg>
<div style="left:9.7px;top:583.5px;width:387.5px;height:4.6px;background:#efeff3;"></div>
<div style="letter-spacing:0.305px;left:21.40px;top:592.00px;height:20px;line-height:20px;font-size:17px;color:#1e1e1e;font-weight:normal;font-family:'Liberation Sans', sans-serif;white-space:pre;-webkit-text-stroke:0.55px #1e1e1e;">Test Detail Summary</div>
<svg style="left:37.6px;top:623.8px;" width="17.7" height="17.7" viewBox="0 0 17.7 17.7"><circle cx="8.85" cy="8.85" r="8.85" fill="#339933"/><path d="M4.652571428571428 9.305142857142856 L7.686857142857142 12.743999999999998 L12.743999999999998 4.854857142857142" fill="none" stroke="#fff" stroke-width="2.326285714285714" stroke-linecap="butt" stroke-linejoin="miter"/></svg>
<div style="letter-spacing:0.484px;left:65.60px;top:622.30px;height:20px;line-height:20px;font-size:14.8px;color:#1e1e1e;font-weight:normal;font-family:'Liberation Sans', sans-serif;white-space:pre;">GamerPowerEqualCompare</div>
<svg style="left:59px;top:651px;" width="12.4" height="14.6" viewBox="0 0 12.4 14.6"><rect x="0.8" y="0.8" width="10.6" height="13" fill="#fafafa" stroke="#7a7a7a" stroke-width="1.5"/><path d="M3 4.2 H9 M3 6.8 H7.4 M3 9.4 H9" stroke="#8a8a8a" stroke-width="1.2"/></svg>
<div style="letter-spacing:0.013px;left:83.70px;top:649.60px;height:20px;line-height:20px;font-size:15.6px;color:#1e1e1e;font-weight:normal;font-family:'Liberation Sans', sans-serif;white-space:pre;">Source</div>
<div style="letter-spacing:0.000px;left:130.60px;top:649.60px;height:20px;line-height:20px;font-size:14.7px;color:#1e1e1e;font-weight:normal;font-family:'Liberation Mono', monospace;white-space:pre;">:</div>
<div style="left:150px;top:647.5px;width:247.4px;height:26px;overflow:hidden;">
<div style="letter-spacing:-0.050px;left:0.50px;top:2.20px;height:20px;line-height:20px;font-size:14.7px;color:#1a1aa6;font-weight:normal;font-family:'Liberation Mono', monospace;white-space:pre;text-decoration:underline;text-underline-offset:2.5px;">S1101ObjectCollectionAssertionEqualAndCompareToOtherClass.cs</div>
</div>
<svg style="left:55.8px;top:676.8px;" width="17.2" height="17.2" viewBox="0 0 17.2 17.2"><circle cx="8.6" cy="8.6" r="7.6" fill="#f5f5f5" stroke="#7a7a7a" stroke-width="1.6"/><path d="M8.2 4.2 V9.2 H12.4" fill="none" stroke="#7a7a7a" stroke-width="1.5"/></svg>
<div style="letter-spacing:0.562px;left:83.40px;top:675.20px;height:20px;line-height:20px;font-size:15.6px;color:#1e1e1e;font-weight:normal;font-family:'Liberation Sans', sans-serif;white-space:pre;">Duration</div>
<div style="letter-spacing:0.000px;left:144.20px;top:675.20px;height:20px;line-height:20px;font-size:14.7px;color:#1e1e1e;font-weight:normal;font-family:'Liberation Mono', monospace;white-space:pre;">:</div>
<div style="letter-spacing:0.319px;left:163.20px;top:675.40px;height:20px;line-height:20px;font-size:14.7px;color:#1e1e1e;font-weight:normal;font-family:'Liberation Mono', monospace;white-space:pre;">1 ms</div>
<svg style="left:28.4px;top:932.8px;" width="6.6" height="11" viewBox="0 0 6.6 11"><path d="M6.6 0 V11 L0 5.5 Z" fill="#8c8d96"/></svg>
<div style="left:42px;top:933px;width:168px;height:10.7px;background:#c2c3c9;"></div>
<svg style="left:384.4px;top:932.8px;" width="6.6" height="11" viewBox="0 0 6.6 11"><path d="M0 0 V11 L6.6 5.5 Z" fill="#8c8d96"/></svg>
<div style="left:8.7px;top:948.5px;width:98.6px;height:25px;background:#f5f5f5;border:1px solid #ccced8;border-top:none;box-sizing:border-box;"></div>
<div style="letter-spacing:-0.202px;left:16.00px;top:951.80px;height:20px;line-height:20px;font-size:14.8px;color:#0e70c0;font-weight:normal;font-family:'Liberation Sans', sans-serif;white-space:pre;">Test Explorer</div>
<div style="letter-spacing:-0.219px;left:114.20px;top:951.80px;height:20px;line-height:20px;font-size:14.8px;color:#444444;font-weight:normal;font-family:'Liberation Sans', sans-serif;white-space:pre;">Server Explorer</div>
<div style="letter-spacing:0.400px;left:228.20px;top:951.80px;height:20px;line-height:20px;font-size:14.8px;color:#444444;font-weight:normal;font-family:'Liberation Sans', sans-serif;white-space:pre;">Toolbox</div>
<div style="letter-spacing:-0.176px;left:7.60px;top:981.80px;height:20px;line-height:20px;font-size:14.8px;color:#444444;font-weight:normal;font-family:'Liberation Sans', sans-serif;white-space:pre;">Package Manager Console</div>
<div style="letter-spacing:0.218px;left:197.40px;top:981.80px;height:20px;line-height:20px;font-size:14.8px;color:#444444;font-weight:normal;font-family:'Liberation Sans', sans-serif;white-space:pre;">Output</div>
<div style="letter-spacing:-0.190px;left:257.80px;top:981.80px;height:20px;line-height:20px;font-size:14.8px;color:#444444;font-weight:normal;font-family:'Liberation Sans', sans-serif;white-space:pre;">Error List</div>
<div style="left:8.3px;top:1005.3px;width:173.7px;height:8px;background:#ccced9;"></div>
<div style="left:197.3px;top:1005.3px;width:45.5px;height:8px;background:#ccced9;"></div>
<div style="left:258.6px;top:1005.3px;width:57.4px;height:8px;background:#ccced9;"></div>
<div style="left:0px;top:1013px;width:1920px;height:27px;background:#007acc;"></div>
<svg style="left:5.4px;top:1021.6px;" width="20" height="13.6" viewBox="0 0 20 13.6"><path d="M4 0.9 H19 L16 12.7 H1 Z" fill="none" stroke="#fff" stroke-width="1.5"/></svg>
<div style="letter-spacing:-0.443px;left:34.40px;top:1018.90px;height:20px;line-height:20px;font-size:14.8px;color:#ffffff;font-weight:normal;font-family:'Liberation Sans', sans-serif;white-space:pre;">Ready</div>
<div style="letter-spacing:-0.452px;left:414.20px;top:132.40px;height:20px;line-height:20px;font-size:14.8px;color:#1e1e1e;font-weight:normal;font-family:'Liberation Sans', sans-serif;white-space:pre;">GamerH.cs</div>
<svg style="left:499.5px;top:137.2px;" width="8" height="10" viewBox="0 0 8 10"><path d="M2 0.5 H6 M2.5 0.5 V5 M5.5 0.5 V5 M0.5 5.5 H7.5 M4 5.5 V9.5" stroke="#6a6a6a" stroke-width="1.1" fill="none"/><rect x="4.2" y="0.5" width="1.6" height="4.6" fill="#6a6a6a"/></svg>
<div style="letter-spacing:-0.199px;left:549.50px;top:132.40px;height:20px;line-height:20px;font-size:14.8px;color:#1e1e1e;font-weight:normal;font-family:'Liberation Sans', sans-serif;white-space:pre;">GamerHComparer.cs</div>
<svg style="left:700.7px;top:137.2px;" width="8" height="10" viewBox="0 0 8 10"><path d="M2 0.5 H6 M2.5 0.5 V5 M5.5 0.5 V5 M0.5 5.5 H7.5 M4 5.5 V9.5" stroke="#6a6a6a" stroke-width="1.1" fill="none"/><rect x="4.2" y="0.5" width="1.6" height="4.6" fill="#6a6a6a"/></svg>
<div style="letter-spacing:-0.435px;left:750.00px;top:132.40px;height:20px;line-height:20px;font-size:14.8px;color:#1e1e1e;font-weight:normal;font-family:'Liberation Sans', sans-serif;white-space:pre;">GamerPowerH.cs</div>
<svg style="left:874.8px;top:137.2px;" width="8" height="10" viewBox="0 0 8 10"><path d="M2 0.5 H6 M2.5 0.5 V5 M5.5 0.5 V5 M0.5 5.5 H7.5 M4 5.5 V9.5" stroke="#6a6a6a" stroke-width="1.1" fill="none"/><rect x="4.2" y="0.5" width="1.6" height="4.6" fill="#6a6a6a"/></svg>
<div style="letter-spacing:-0.230px;left:925.50px;top:132.40px;height:20px;line-height:20px;font-size:14.8px;color:#1e1e1e;font-weight:normal;font-family:'Liberation Sans', sans-serif;white-space:pre;">GamerPowerHComparer.cs</div>
<svg style="left:1116.2px;top:137.2px;" width="8" height="10" viewBox="0 0 8 10"><path d="M2 0.5 H6 M2.5 0.5 V5 M5.5 0.5 V5 M0.5 5.5 H7.5 M4 5.5 V9.5" stroke="#6a6a6a" stroke-width="1.1" fill="none"/><rect x="4.2" y="0.5" width="1.6" height="4.6" fill="#6a6a6a"/></svg>
<div style="letter-spacing:-0.224px;left:1166.20px;top:132.40px;height:20px;line-height:20px;font-size:14.8px;color:#1e1e1e;font-weight:normal;font-family:'Liberation Sans', sans-serif;white-space:pre;">GamerMagicPowerH.cs</div>
<svg style="left:1332.5px;top:137.2px;" width="8" height="10" viewBox="0 0 8 10"><path d="M2 0.5 H6 M2.5 0.5 V5 M5.5 0.5 V5 M0.5 5.5 H7.5 M4 5.5 V9.5" stroke="#6a6a6a" stroke-width="1.1" fill="none"/><rect x="4.2" y="0.5" width="1.6" height="4.6" fill="#6a6a6a"/></svg>
<div style="left:1376.2px;top:128.7px;width:325.6px;height:27px;background:#ccced9;"></div>
<div style="letter-spacing:-0.204px;left:1381.20px;top:133.00px;height:20px;line-height:20px;font-size:14.8px;color:#6d6d6d;font-weight:normal;font-family:'Liberation Sans', sans-serif;white-space:pre;">S1101ObjectCollect...areToOtherClass.cs</div>
<svg style="left:1659px;top:137.2px;" width="8" height="10" viewBox="0 0 8 10"><path d="M2 0.5 H6 M2.5 0.5 V5 M5.5 0.5 V5 M0.5 5.5 H7.5 M4 5.5 V9.5" stroke="#5a5a68" stroke-width="1.1" fill="none"/><rect x="4.2" y="0.5" width="1.6" height="4.6" fill="#5a5a68"/></svg>
<svg style="left:1682.5px;top:136.8px;" width="11" height="10.6" viewBox="0 0 11 10.6"><path d="M0.7 0.7 L10.3 10.3 M10.3 0.7 L0.7 10.3" stroke="#5f6070" stroke-width="1.6"/></svg>
<svg style="left:1868px;top:141px;" width="8.4" height="4.8" viewBox="0 0 8.4 4.8"><path d="M0 0 H8.4 L4.2 4.8 Z" fill="#6a6a6a"/></svg>
<div style="left:408px;top:154.3px;width:1472px;height:3.2px;background:#ccced9;"></div>
<div style="left:408px;top:157.5px;width:1472px;height:25px;background:#ccced9;"></div>
<div style="left:408.2px;top:157.5px;width:486.8px;height:23.6px;background:#ffffff;"></div>
<div style="left:900.5px;top:157.5px;width:487.6px;height:23.6px;background:#ffffff;"></div>
<div style="left:1393.9px;top:157.5px;width:485.6px;height:23.6px;background:#ffffff;"></div>
<svg style="left:413px;top:162px;" width="17.8" height="14.2" viewBox="0 0 17.8 14.2"><rect x="0.7" y="0.7" width="16.4" height="12.8" fill="#fff" stroke="#388a34" stroke-width="1.4"/><path d="M7.8 4.6 Q5.6 3.2 4.2 5 Q3 7.1 4.2 9.2 Q5.6 11 7.8 9.6" fill="none" stroke="#3a3a3a" stroke-width="1.3"/><path d="M10.6 4 V10.2 M13.2 4 V10.2 M9.2 5.9 H14.6 M9.2 8.3 H14.6" stroke="#3a3a3a" stroke-width="1.1"/></svg>
<div style="letter-spacing:-0.084px;left:434.20px;top:160.20px;height:20px;line-height:20px;font-size:14.8px;color:#1e1e1e;font-weight:normal;font-family:'Liberation Sans', sans-serif;white-space:pre;">OnlineGame.NUnit</div>
<svg style="left:884.2px;top:168.2px;" width="6.6" height="3.7" viewBox="0 0 6.6 3.7"><path d="M0 0 H6.6 L3.3 3.7 Z" fill="#5a5a5a"/></svg>
<svg style="left:905px;top:160px;" width="18" height="17.2" viewBox="0 0 18 17.2"><path d="M4.9 0 L9.8 4.6 L4.9 9.2 L0 4.6 Z" fill="#cf8b17"/><path d="M8.4 6 H13 M9.6 6.2 V13.9 H12.8" fill="none" stroke="#c58a2a" stroke-width="1.4"/><path d="M15 5.2 L17.7 7.9 L15 10.6 L12.3 7.9 Z" fill="#cf8b17"/><path d="M14.8 11.7 L17.5 14.4 L14.8 17.1 L12.1 14.4 Z" fill="#cf8b17"/></svg>
<div style="letter-spacing:-0.035px;left:926.20px;top:160.20px;height:20px;line-height:20px;font-size:14.8px;color:#1e1e1e;font-weight:normal;font-family:'Liberation Sans', sans-serif;white-space:pre;">OnlineGame.NUnit.S1101ObjectCollectionAssertionEqualAndComp</div>
<svg style="left:1377.4px;top:168.2px;" width="6.6" height="3.7" viewBox="0 0 6.6 3.7"><path d="M0 0 H6.6 L3.3 3.7 Z" fill="#5a5a5a"/></svg>
<svg style="left:1397.8px;top:163.2px;" width="10.6" height="11.4" viewBox="0 0 10.6 11.4"><path d="M5.3 0.6 L9.9 2.9 V8.3 L5.3 10.8 L0.7 8.3 V2.9 Z" fill="#f1e9fb" stroke="#6d5a9e" stroke-width="1.1" stroke-linejoin="round"/><path d="M0.9 3 L5.3 5.4 L9.7 3 M5.3 5.4 V10.6" fill="none" stroke="#6d5a9e" stroke-width="1.1"/></svg>
<div style="letter-spacing:-0.147px;left:1419.50px;top:160.20px;height:20px;line-height:20px;font-size:14.8px;color:#1e1e1e;font-weight:normal;font-family:'Liberation Sans', sans-serif;white-space:pre;">GamerEqualCompare()</div>
<svg style="left:1868.6px;top:168.2px;" width="6.6" height="3.7" viewBox="0 0 6.6 3.7"><path d="M0 0 H6.6 L3.3 3.7 Z" fill="#5a5a5a"/></svg>
<div style="left:408px;top:182.5px;width:1471.6px;height:769.5px;background:#ffffff;overflow:hidden;">
<div style="left:0px;top:0px;width:24.6px;height:771px;background:#e6e7e8;"></div>
<div style="left:257.0px;top:421.905px;width:897.5px;height:25.165px;background:#e3e7f2;"></div>
<div style="left:132px;top:446.77px;width:1038px;height:25.165px;background:#e3e7f2;"></div>
<div style="left:105.79999999999995px;top:0px;width:7px;height:771px;background:#5dd55f;"></div>
<div style="left:123px;top:0px;width:1.9px;height:771px;background:#a0a0a0;"></div>
<svg style="left:135.20000000000005px;top:0px;" width="2" height="771" viewBox="0 0 2 771"><path d="M1 0 V771" stroke="#c4c4c4" stroke-width="1.3" stroke-dasharray="3.7 5.45" stroke-dashoffset="-0.9"/></svg>
<svg style="left:177.20000000000005px;top:0px;" width="2" height="771" viewBox="0 0 2 771"><path d="M1 0 V771" stroke="#c4c4c4" stroke-width="1.3" stroke-dasharray="3.7 5.45" stroke-dashoffset="-0.9"/></svg>
<svg style="left:218.20000000000005px;top:0px;" width="2" height="771" viewBox="0 0 2 771"><path d="M1 0 V771" stroke="#c4c4c4" stroke-width="1.3" stroke-dasharray="3.7 5.45" stroke-dashoffset="-0.9"/></svg>
<div class="ln" style="left:69.7px;top:-0.80px;">676</div>
<div class="cl" style="left:257.0px;top:-0.80px;"><span class="c">//Gamer compare</span></div>
<div class="ln" style="left:69.7px;top:24.06px;">677</div>
<div class="cl" style="left:257.0px;top:24.06px;"><span class="c">//GamerHComparer : IComparer&lt;T&gt;, IComparer, IEqualityComparer&lt;T&gt;</span></div>
<div class="ln" style="left:69.7px;top:48.93px;">678</div>
<div class="cl" style="left:257.0px;top:48.93px;"><span class="c">//-----------------------------------------</span></div>
<div class="ln" style="left:69.7px;top:73.79px;">679</div>
<div class="cl" style="left:257.0px;top:73.79px;"><span class="c">//2.1.</span></div>
<div class="ln" style="left:69.7px;top:98.66px;">680</div>
<div class="cl" style="left:257.0px;top:98.66px;"><span class="c">//Gamer compare - Single Assert</span></div>
<div class="ln" style="left:69.7px;top:123.52px;">681</div>
<div class="cl" style="left:257.0px;top:123.52px;"><span class="c">//----------------------------</span></div>
<div class="ln" style="left:69.7px;top:148.39px;">682</div>
<div class="cl" style="left:257.0px;top:148.39px;"><span class="c">//2.1.1.</span></div>
<div class="ln" style="left:69.7px;top:173.25px;">683</div>
<div class="cl" style="left:257.0px;top:173.25px;"><span class="c">//MSTest&amp;NUnit</span></div>
<div class="ln" style="left:69.7px;top:198.12px;">684</div>
<div class="cl" style="left:257.0px;top:198.12px;"><span class="c">//GamerHComparer : IComparer&lt;T&gt;, IComparer, IEqualityComparer&lt;T&gt;</span></div>
<div class="ln" style="left:69.7px;top:222.99px;">685</div>
<div class="cl" style="left:257.0px;top:222.99px;"><span class="k">Assert</span>.<span class="m">IsTrue</span>(<span class="h" style="width:87.9px">condition:</span>_gamerComparer.<span class="m">Compare</span>(<span class="h" style="width:23.3px">x:</span><span class="fo">(</span><span class="fk">object</span><span class="fo">)</span>_gamer1, <span class="h" style="width:21.9px">y:</span><span class="fo">(</span><span class="fk">object</span><span class="fo">)</span>_gamer1V2) == 0); <span class="c">//IComparer</span></div>
<div class="ln" style="left:69.7px;top:247.85px;">686</div>
<div class="cl" style="left:257.0px;top:247.85px;"><span class="k">Assert</span>.<span class="m">IsTrue</span>(<span class="h" style="width:87.9px">condition:</span>_gamerComparer.<span class="m">Compare</span>(<span class="h" style="width:23.3px">x:</span>_gamer1, <span class="h" style="width:21.9px">y:</span>_gamer1V2) == 0); <span class="c">//IComparer&lt;T&gt;</span></div>
<div class="ln" style="left:69.7px;top:272.71px;">687</div>
<div class="cl" style="left:257.0px;top:272.71px;"><span class="k">Assert</span>.<span class="m">IsTrue</span>(<span class="h" style="width:87.9px">condition:</span>_gamerComparer.<span class="m">Equals</span>(<span class="h" style="width:23.3px">x:</span>_gamer1, <span class="h" style="width:21.9px">y:</span>_gamer1V2)); <span class="c">//IEqualityComparer&lt;T&gt;</span></div>
<div class="ln" style="left:69.7px;top:297.58px;">688</div>
<div class="cl" style="left:257.0px;top:297.58px;"><span class="c">//----------------------------</span></div>
<div class="ln" style="left:69.7px;top:322.44px;">689</div>
<div class="cl" style="left:257.0px;top:322.44px;"><span class="c">//2.1.2.</span></div>
<div class="ln" style="left:69.7px;top:347.31px;">690</div>
<div class="cl" style="left:257.0px;top:347.31px;"><span class="c">//FluentAssertions</span></div>
<div class="ln" style="left:69.7px;top:372.17px;">691</div>
<div class="cl" style="left:257.0px;top:372.17px;"><span class="c">//GamerPowerHComparer : IComparer&lt;T&gt;, IComparer, IEqualityComparer&lt;T&gt;</span></div>
<div class="ln" style="left:69.7px;top:397.04px;">692</div>
<div class="cl" style="left:257.0px;top:397.04px;">_gamerComparer.<span class="m">Compare</span>(<span class="h" style="width:23.3px">x:</span><span class="fo">(</span><span class="fk">object</span><span class="fo">)</span>_gamer1, <span class="h" style="width:21.9px">y:</span><span class="fo">(</span><span class="fk">object</span><span class="fo">)</span>_gamer1V2).<span class="m">Should</span>().<span class="m">Be</span>(<span class="h" style="width:78.5px">expected:</span>0); <span class="c">//IComparer</span></div>
<div class="ln" style="left:69.7px;top:421.90px;">693</div>
<div class="cl" style="left:257.0px;top:421.90px;">_gamerComparer.<span class="m">Compare</span>(<span class="h hf" style="width:23.3px">x:</span>_gamer1, <span class="h hf" style="width:21.9px">y:</span>_gamer1V2).<span class="m">Should</span>().<span class="m">Be</span>(<span class="h hf" style="width:78.5px">expected:</span>0); <span class="c">//IComparer&lt;T&gt;</span></div>
<div class="ln" style="left:69.7px;top:446.77px;">694</div>
<div class="cl" style="left:257.0px;top:446.77px;">_gamerComparer.<span class="m">Equals</span>(<span class="h hf" style="width:23.3px">x:</span>_gamer1, <span class="h hf" style="width:21.9px">y:</span>_gamer1V2).<span class="m">Should</span>().<span class="m">BeTrue</span>(); <span class="c">//IEqualityComparer&lt;T&gt;</span></div>
<div class="ln" style="left:69.7px;top:471.63px;">695</div>
<div class="cl" style="left:257.0px;top:471.63px;"><span class="c">//-----------------------------------------</span></div>
<div class="ln" style="left:69.7px;top:496.50px;">696</div>
<div class="cl" style="left:257.0px;top:496.50px;"><span class="c">//2.2.</span></div>
<div class="ln" style="left:69.7px;top:521.37px;">697</div>
<div class="cl" style="left:257.0px;top:521.37px;"><span class="c">//Gamer compare - Collection Assert</span></div>
<div class="ln" style="left:69.7px;top:546.23px;">698</div>
<div class="cl" style="left:257.0px;top:546.23px;"><span class="c">//----------------------------</span></div>
<div class="ln" style="left:69.7px;top:571.10px;">699</div>
<div class="cl" style="left:257.0px;top:571.10px;"><span class="c">//2.2.1.</span></div>
<div class="ln" style="left:69.7px;top:595.96px;">700</div>
<div class="cl" style="left:257.0px;top:595.96px;"><span class="c">//MSTest&amp;NUnit</span></div>
<div class="ln" style="left:69.7px;top:620.83px;">701</div>
<div class="cl" style="left:257.0px;top:620.83px;"><span class="c">//GamerHComparer : IComparer&lt;T&gt;, IComparer, IEqualityComparer&lt;T&gt;</span></div>
<div class="ln" style="left:69.7px;top:645.69px;">702</div>
<div class="cl" style="left:257.0px;top:645.69px;"><span class="k">CollectionAssert</span>.<span class="m">AreEqual</span>(<span class="h" style="width:79.60000000000001px">expected:</span>_gamerList1, <span class="h" style="width:63.3px">actual:</span>_gamerList1V2, _gamerComparer); <span class="c">//Because implement</span></div>
<div class="cl" style="left:257.0px;top:670.55px;">  <span class="c">&quot;IComparer&quot;</span></div>
<div class="ln" style="left:69.7px;top:695.42px;">703</div>
<div class="cl" style="left:257.0px;top:695.42px;"><span class="c">//CollectionAssert.AreEqual(_gamerList1, _gamerList1V2); //Fail</span></div>
<div class="ln" style="left:69.7px;top:720.28px;">704</div>
<div class="cl" style="left:257.0px;top:720.28px;"><span class="c">//----------------------------</span></div>
<div class="ln" style="left:69.7px;top:745.15px;">705</div>
<div class="cl" style="left:257.0px;top:745.15px;"><span class="c">//1.2.2.</span></div>
<svg style="left:1423.6px;top:652.5px;" width="12.4" height="11.2" viewBox="0 0 12.4 11.2"><path d="M0.4 1.6 H7.4 Q11.2 1.6 11.2 4.9 Q11.2 8 6.4 8.1" fill="none" stroke="#2b8c9c" stroke-width="1.7"/><path d="M6.8 4.4 L2.6 8.1 L6.8 11 Z" fill="#2b8c9c"/></svg>
<svg style="left:183.5px;top:344.4px;" width="8" height="16" viewBox="0 0 8 16"><path d="M0.5 0.7 H3 Q4 0.7 4 2 Q4 0.7 5 0.7 H7.5 M4 2 V14 M0.5 15.3 H3 Q4 15.3 4 14 Q4 15.3 5 15.3 H7.5" fill="none" stroke="#000" stroke-width="1.2"/></svg>
<div style="left:1438.6px;top:0px;width:33.6px;height:771px;background:#f3f3f5;"></div>
<div style="left:1438.6px;top:0px;width:33.6px;height:22px;background:#f5f5f5;border-bottom:1px solid #dcdde3;border-left:1px solid #e3e4ea;box-sizing:border-box;"></div>
<svg style="left:1448.6px;top:3.5px;" width="13" height="16" viewBox="0 0 13 16"><path d="M6.5 0.4 V15.6 M3.8 3.2 L6.5 0.5 L9.2 3.2 M3.8 12.8 L6.5 15.5 L9.2 12.8" fill="none" stroke="#2a2a2a" stroke-width="1.4"/><path d="M0 6.6 H13 M0 9.4 H13" stroke="#2a2a2a" stroke-width="1.3"/></svg>
<svg style="left:1448px;top:24.30000000000001px;" width="14.4" height="13.4" viewBox="0 0 14.4 13.4"><path d="M7.2 0.6 L13.9 12.8 H0.5 Z" fill="#f5a623" stroke="#f5a623" stroke-width="1" stroke-linejoin="round"/><rect x="6.4" y="4.6" width="1.7" height="4.2" fill="#5a3a00"/><rect x="6.4" y="9.8" width="1.7" height="1.7" fill="#5a3a00"/></svg>
<svg style="left:1450px;top:47.900000000000006px;" width="10.4" height="6.4" viewBox="0 0 10.4 6.4"><path d="M0 6.4 H10.4 L5.2 0 Z" fill="#8c8d96"/></svg>
<div style="left:1439.4px;top:137.5px;width:5.4px;height:390px;background:#5fd463;"></div>
<div style="left:1444.8px;top:203.10000000000002px;width:22.2px;height:273px;background:#c2c3c9;"></div>
<div style="left:1460.4px;top:66.6px;width:11.6px;height:1.9px;background:#f5a623;"></div>
<div style="left:1460.4px;top:109.20000000000002px;width:11.6px;height:1.9px;background:#f5a623;"></div>
<div style="left:1460.4px;top:129.79999999999998px;width:11.6px;height:1.9px;background:#f5a623;"></div>
<div style="left:1460.4px;top:150.6px;width:11.6px;height:1.9px;background:#f5a623;"></div>
<div style="left:1460.4px;top:265.6px;width:11.6px;height:1.9px;background:#f5a623;"></div>
<div style="left:1460.4px;top:340.6px;width:11.6px;height:1.9px;background:#f5a623;"></div>
<div style="left:1453px;top:106.69999999999999px;width:7.2px;height:7.2px;background:#0f7b0f;"></div>
<div style="left:1453px;top:127.30000000000001px;width:7.2px;height:7.2px;background:#a9a9ae;"></div>
<div style="left:1438.6px;top:387.1px;width:33.6px;height:2.2px;background:#0a0ac0;"></div>
<svg style="left:1450.6px;top:755.1px;" width="9.6" height="5.6" viewBox="0 0 9.6 5.6"><path d="M0 0 H9.6 L4.8 5.6 Z" fill="#8c8d96"/></svg>
</div>
<div style="left:408px;top:952px;width:1472px;height:21.5px;background:#f3f3f5;border-bottom:1px solid #ccced8;box-sizing:border-box;"></div>
<div style="left:408.3px;top:952.6px;width:74.6px;height:20.4px;background:#ffffff;border:1px solid #ccced8;box-sizing:border-box;"></div>
<div style="letter-spacing:-0.140px;left:411.00px;top:953.00px;height:20px;line-height:20px;font-size:14.2px;color:#1e1e1e;font-weight:normal;font-family:'Liberation Sans', sans-serif;white-space:pre;">117 %</div>
<svg style="left:472.4px;top:960.8px;" width="6.2" height="3.6" viewBox="0 0 6.2 3.6"><path d="M0 0 H6.2 L3.1 3.6 Z" fill="#5a5a5a"/></svg>
<svg style="left:516px;top:954.6px;" width="15.4" height="15.4" viewBox="0 0 15.4 15.4"><circle cx="7.7" cy="7.7" r="7.7" fill="#e51c23"/><path d="M4.5760000000000005 4.5760000000000005 L10.824 10.824 M10.824 4.5760000000000005 L4.5760000000000005 10.824" stroke="#fff" stroke-width="2.2880000000000003" stroke-linecap="round"/></svg>
<div style="letter-spacing:0.000px;left:537.50px;top:953.00px;height:20px;line-height:20px;font-size:13.6px;color:#1e1e1e;font-weight:normal;font-family:'Liberation Sans', sans-serif;white-space:pre;">0</div>
<svg style="left:574px;top:955px;" width="14.4" height="13.6" viewBox="0 0 14.4 13.6"><path d="M7.2 0.6 L13.9 13 H0.5 Z" fill="#ffcc00" stroke="#e8b400" stroke-width="0.8" stroke-linejoin="round"/><rect x="6.3" y="4.4" width="1.8" height="4.6" fill="#1e1e1e"/><rect x="6.3" y="10" width="1.8" height="1.8" fill="#1e1e1e"/></svg>
<div style="letter-spacing:0.000px;left:594.40px;top:953.00px;height:20px;line-height:20px;font-size:13.6px;color:#1e1e1e;font-weight:normal;font-family:'Liberation Sans', sans-serif;white-space:pre;">3</div>
<svg style="left:643.3px;top:957px;" width="12" height="10.4" viewBox="0 0 12 10.4"><path d="M11.6 5.2 H2 M5.8 1 L1.6 5.2 L5.8 9.4" fill="none" stroke="#0e5aa8" stroke-width="2.1"/></svg>
<svg style="left:678.3px;top:957px;" width="12" height="10.4" viewBox="0 0 12 10.4"><path d="M0.4 5.2 H10 M6.2 1 L10.4 5.2 L6.2 9.4" fill="none" stroke="#0e5aa8" stroke-width="2.1"/></svg>
<div style="left:711px;top:953.5px;width:1px;height:18px;background:#c8c9d2;"></div>
<svg style="left:730px;top:954.4px;" width="15" height="15" viewBox="0 0 15 15"><path d="M9.6 0.8 L13.6 3 L11.6 6.4" fill="none" stroke="#5a5a5a" stroke-width="1.6"/><path d="M3.2 5.2 L11 7.4 L8 14.4 L0.8 10.2 Z" fill="#8a8a8a" stroke="#4a4a4a" stroke-width="1.1"/><path d="M4 9 L7 13" stroke="#eee" stroke-width="0.9"/></svg>
<svg style="left:751px;top:960.4px;" width="8" height="4.6" viewBox="0 0 8 4.6"><path d="M0 0 H8 L4.0 4.6 Z" fill="#1e1e1e"/></svg>
<div style="left:407.2px;top:157.5px;width:0.9px;height:816px;background:#c9cbd6;"></div>
<div style="left:1879.6px;top:154.6px;width:1.1px;height:819px;background:#c9cbd6;"></div>
<div style="left:1912px;top:129.4px;width:8px;height:123.0px;background:#ccced9;"></div>
<div style="letter-spacing:-0.153px;left:1907.2px;top:129.8px;height:20px;line-height:20px;font-size:14.8px;color:#444444;font-family:'Liberation Sans', sans-serif;white-space:pre;transform-origin:0 0;transform:rotate(90deg);">Unit Test Coverage</div>
<div style="left:1912px;top:268.6px;width:8px;height:66.0px;background:#ccced9;"></div>
<div style="letter-spacing:-0.116px;left:1907.2px;top:269.0px;height:20px;line-height:20px;font-size:14.8px;color:#444444;font-family:'Liberation Sans', sans-serif;white-space:pre;transform-origin:0 0;transform:rotate(90deg);">Properties</div>
<div style="left:1912px;top:350.2px;width:8px;height:113.60000000000002px;background:#ccced9;"></div>
<div style="letter-spacing:-0.010px;left:1907.2px;top:350.59999999999997px;height:20px;line-height:20px;font-size:14.8px;color:#444444;font-family:'Liberation Sans', sans-serif;white-space:pre;transform-origin:0 0;transform:rotate(90deg);">Solution Explorer</div>
<div style="left:1912px;top:479.6px;width:8px;height:93.79999999999995px;background:#ccced9;"></div>
<div style="letter-spacing:-0.222px;left:1907.2px;top:480.0px;height:20px;line-height:20px;font-size:14.8px;color:#444444;font-family:'Liberation Sans', sans-serif;white-space:pre;transform-origin:0 0;transform:rotate(90deg);">Team Explorer</div>
<svg style="left:1561.4px;top:1021.6px;" width="11" height="13.4" viewBox="0 0 11 13.4"><path d="M5.5 13.2 V1.6 M1 6 L5.5 1.4 L10 6" fill="none" stroke="#fff" stroke-width="1.9"/></svg>
<div style="letter-spacing:0.105px;left:1584.20px;top:1018.90px;height:20px;line-height:20px;font-size:14.8px;color:#ffffff;font-weight:normal;font-family:'Liberation Sans', sans-serif;white-space:pre;">Add to Source Control</div>
<svg style="left:1740.6px;top:1025.6px;" width="9" height="5" viewBox="0 0 9 5"><path d="M0 5 H9 L4.5 0 Z" fill="#ffffff"/></svg>
<svg style="left:1774px;top:1019px;" width="28" height="22" viewBox="0 0 28 22"><path d="M1.2 13.4 C3.6 11.6 2.8 5 7 3.2 C7.4 0.8 10.2 0.8 10.6 3.2 C14.6 4.6 13.8 10.4 15 12.2 L15.8 13.4 Z" fill="#d6d8de"/><circle cx="9" cy="15.2" r="2" fill="#d6d8de"/><circle cx="19" cy="14" r="7" fill="#e51c23"/><text x="19" y="18.4" font-family="Liberation Sans" font-size="12" fill="#fff" text-anchor="middle">4</text></svg>
<svg style="left:1827px;top:1017px;" width="18" height="21" viewBox="0 0 18 21"><path d="M3.6 8.2 H16.4 L14.4 16.4 H5 L1.4 19 L2.6 14.6 Z" fill="#1e3a5c" stroke="#f2f2f2" stroke-width="1.3" stroke-linejoin="round"/><path d="M9.4 1.2 H12.4 L11.6 9.4 H13.2 L12.6 14 H7.4 L8 9.4 H9.2 Z" fill="#f0a030"/><rect x="9.2" y="10.4" width="1.8" height="1.8" fill="#fff3d6"/></svg>
<svg style="left:1863px;top:1015px;" width="26" height="26" viewBox="0 0 26 26"><circle cx="12" cy="11.8" r="10.8" fill="#e6e8ee"/><circle cx="12" cy="11.8" r="9.4" fill="#e9e9ee" stroke="#3a3a3a" stroke-width="1"/><circle cx="12" cy="11.8" r="10.6" fill="none" stroke="#fff" stroke-width="0.9"/><circle cx="19.2" cy="20.4" r="4.2" fill="#1e1e1e" stroke="#fff" stroke-width="1"/><path d="M19.2 17.6 A2.8 2.8 0 0 1 19.2 23.2 Z" fill="#fff"/></svg>
<svg style="left:1893px;top:1016.8px;" width="23" height="23" viewBox="0 0 23 23"><circle cx="11.5" cy="11.5" r="11.3" fill="#a6e3c4"/><circle cx="11.5" cy="11.5" r="10" fill="#2e9e3a"/><path d="M6.2 12.2 L10 16.6 L16.6 6.2" fill="none" stroke="#fff" stroke-width="2.8"/></svg>
</div></body></html>
